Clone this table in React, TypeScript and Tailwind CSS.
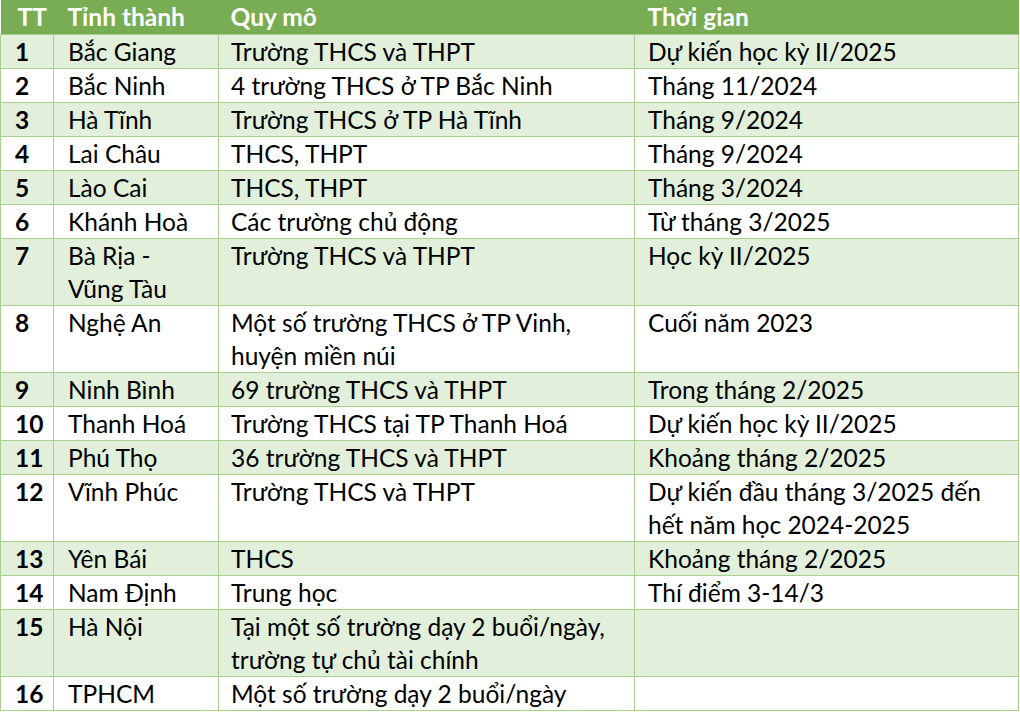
const rows: { tt: string; tinh: string[]; quy: string[]; time: string[] }[] = [
  { tt: "1", tinh: ["Bắc Giang"], quy: ["Trường THCS và THPT"], time: ["Dự kiến học kỳ II/2025"] },
  { tt: "2", tinh: ["Bắc Ninh"], quy: ["4 trường THCS ở TP Bắc Ninh"], time: ["Tháng 11/2024"] },
  { tt: "3", tinh: ["Hà Tĩnh"], quy: ["Trường THCS ở TP Hà Tĩnh"], time: ["Tháng 9/2024"] },
  { tt: "4", tinh: ["Lai Châu"], quy: ["THCS, THPT"], time: ["Tháng 9/2024"] },
  { tt: "5", tinh: ["Lào Cai"], quy: ["THCS, THPT"], time: ["Tháng 3/2024"] },
  { tt: "6", tinh: ["Khánh Hoà"], quy: ["Các trường chủ động"], time: ["Từ tháng 3/2025"] },
  { tt: "7", tinh: ["Bà Rịa -", "Vũng Tàu"], quy: ["Trường THCS và THPT"], time: ["Học kỳ II/2025"] },
  { tt: "8", tinh: ["Nghệ An"], quy: ["Một số trường THCS ở TP Vinh,", "huyện miền núi"], time: ["Cuối năm 2023"] },
  { tt: "9", tinh: ["Ninh Bình"], quy: ["69 trường THCS và THPT"], time: ["Trong tháng 2/2025"] },
  { tt: "10", tinh: ["Thanh Hoá"], quy: ["Trường THCS tại TP Thanh Hoá"], time: ["Dự kiến học kỳ II/2025"] },
  { tt: "11", tinh: ["Phú Thọ"], quy: ["36 trường THCS và THPT"], time: ["Khoảng tháng 2/2025"] },
  { tt: "12", tinh: ["Vĩnh Phúc"], quy: ["Trường THCS và THPT"], time: ["Dự kiến đầu tháng 3/2025 đến", "hết năm học 2024-2025"] },
  { tt: "13", tinh: ["Yên Bái"], quy: ["THCS"], time: ["Khoảng tháng 2/2025"] },
  { tt: "14", tinh: ["Nam Định"], quy: ["Trung học"], time: ["Thí điểm 3-14/3"] },
  { tt: "15", tinh: ["Hà Nội"], quy: ["Tại một số trường dạy 2 buổi/ngày,", "trường tự chủ tài chính"], time: [] },
  { tt: "16", tinh: ["TPHCM"], quy: ["Một số trường dạy 2 buổi/ngày"], time: [] },
];

const Lines = ({ lines }: { lines: string[] }) => (
  <>
    {lines.map((l, i) => (
      <div key={i}>{l}</div>
    ))}
  </>
);

export default function App() {
  return (
    <div className="w-[1020px] h-[715px] bg-white overflow-hidden font-['Lato','Liberation_Sans',sans-serif] text-[24.5px] text-black">
      <table className="border-collapse table-fixed w-[1018px]">
        <colgroup>
          <col className="w-[53px]" />
          <col className="w-[165px]" />
          <col className="w-[416px]" />
          <col className="w-[384px]" />
        </colgroup>
        <thead>
          <tr className="bg-[#78ad53] text-white font-bold h-[34px]">
            <th className="text-left pl-[17px] leading-[33px] border-b border-[#a9d08e]">TT</th>
            <th className="text-left pl-[14px] leading-[33px] border-b border-[#a9d08e]">Tỉnh thành</th>
            <th className="text-left pl-[12px] leading-[33px] border-b border-[#a9d08e]">Quy mô</th>
            <th className="text-left pl-[13px] leading-[33px] border-b border-[#a9d08e]">Thời gian</th>
          </tr>
        </thead>
        <tbody>
          {rows.map((r, i) => (
            <tr key={r.tt} className={i % 2 === 0 ? "bg-[#e2efda]" : "bg-white"}>
              <td className="align-top border border-[#a9d08e] pl-[14px] leading-[33px] font-bold whitespace-nowrap">
                {r.tt}
              </td>
              <td className="align-top border border-[#a9d08e] pl-[14px] leading-[33px] whitespace-nowrap">
                <Lines lines={r.tinh} />
              </td>
              <td className="align-top border border-[#a9d08e] pl-[12px] leading-[33px] whitespace-nowrap">
                <Lines lines={r.quy} />
              </td>
              <td className="align-top border border-[#a9d08e] pl-[13px] leading-[33px] whitespace-nowrap">
                <Lines lines={r.time} />
              </td>
            </tr>
          ))}
        </tbody>
      </table>
    </div>
  );
}
